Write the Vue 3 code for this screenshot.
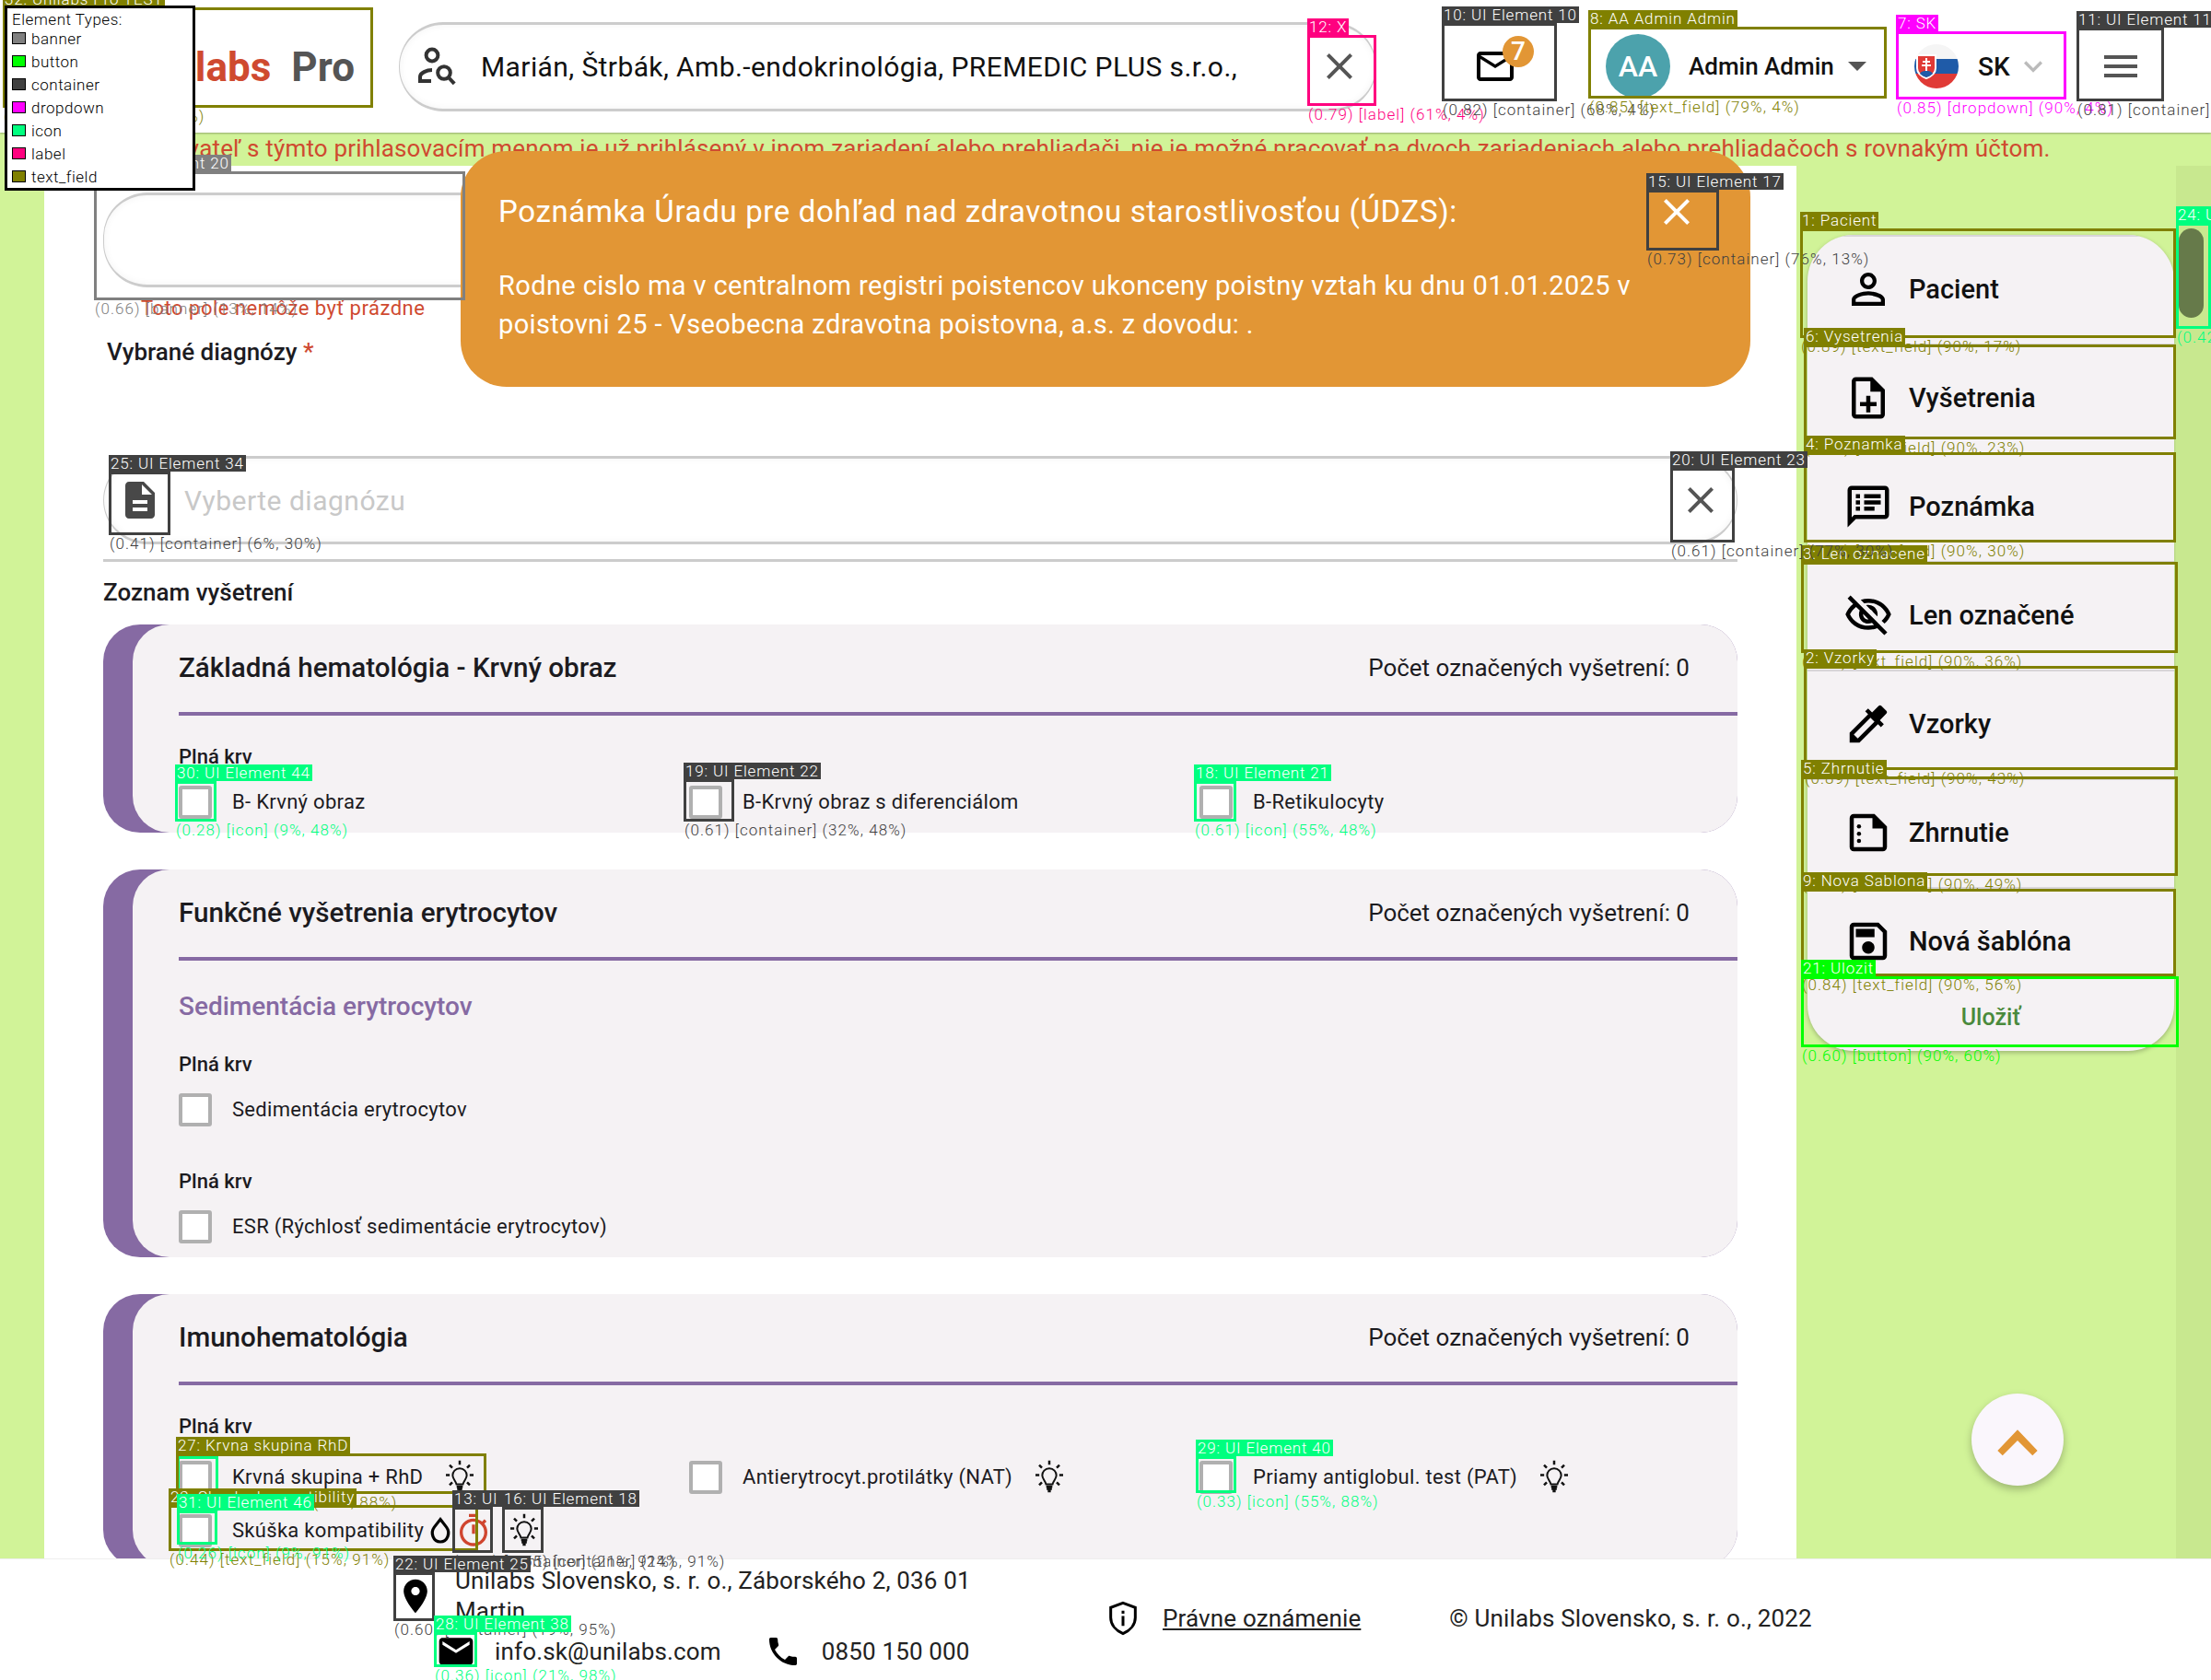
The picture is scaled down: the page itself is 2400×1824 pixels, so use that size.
<template>
  <div class="page">
    <header class="top">
      <div class="logo"><span class="logo-red">Unilabs</span><span class="logo-pro">Pro</span></div>
      <div class="search pill">
        <svg class="search-ico" viewBox="0 0 24 24" fill="none" stroke="#333" stroke-width="2">
          <circle cx="9.5" cy="6" r="3.2" />
          <path d="M3 20v-2.4c0-2 3.6-3.6 6.5-3.6" />
          <path d="M2 20h7" />
          <circle cx="16" cy="15.5" r="3.4" />
          <path d="M18.4 18l3.2 3.4" />
        </svg>
        <span class="search-text">Marián, Štrbák, Amb.-endokrinológia, PREMEDIC PLUS s.r.o.,</span>
        <svg class="ico48 grey push" viewBox="0 0 24 24"><path :d="icons.close" /></svg>
      </div>
      <div class="mail">
        <svg class="ico48" viewBox="0 0 24 24"><path :d="icons.mail" /></svg>
        <span class="badge">7</span>
      </div>
      <div class="user">
        <span class="avatar">AA</span>
        <span class="user-name">Admin Admin</span>
        <svg class="caret" viewBox="0 0 10 5"><path d="M0 0h10L5 5z" /></svg>
      </div>
      <div class="lang">
        <svg class="flag" viewBox="0 0 48 48">
          <defs><clipPath id="flagclip"><circle cx="24" cy="24" r="24" /></clipPath></defs>
          <g clip-path="url(#flagclip)">
            <rect width="48" height="16" fill="#f5f5f5" />
            <rect y="16" width="48" height="16" fill="#1f5ba8" />
            <rect y="32" width="48" height="16" fill="#e03a36" />
            <path d="M3 12h20v14c0 6-5 9-10 11-5-2-10-5-10-11z" fill="#e03a36" stroke="#fff" stroke-width="2" />
            <path d="M13 15v15M9 19h8M8 23h10" stroke="#fff" stroke-width="2" />
            <path d="M6 32c2-3 4-3 7-3s5 0 7 3c-2 2-4 3-7 4-3-1-5-2-7-4z" fill="#1f5ba8" />
          </g>
        </svg>
        <span class="lang-code">SK</span>
        <svg class="ico40" viewBox="0 0 24 24" fill="#bbb"><path :d="icons.expand" /></svg>
      </div>
      <div class="menu">
        <svg class="ico48 grey" viewBox="0 0 24 24"><path :d="icons.menu" /></svg>
      </div>
    </header>

    <div class="warn">Používateľ s týmto prihlasovacím menom je už prihlásený v inom zariadení alebo prehliadači, nie je možné pracovať na dvoch zariadeniach alebo prehliadačoch s rovnakým účtom.</div>

    <div class="body">
      <main class="main">
        <div class="pill empty"></div>
        <div class="err">Toto pole nemôže byť prázdne</div>
        <div class="field-label">Vybrané diagnózy <span class="req">*</span></div>
        <div class="diag-wrap">
          <div class="pill diag">
            <svg class="ico48 dark" viewBox="0 0 24 24"><path :d="icons.doc" /></svg>
            <span class="placeholder">Vyberte diagnózu</span>
            <svg class="ico48 grey push" viewBox="0 0 24 24"><path :d="icons.close" /></svg>
          </div>
        </div>
        <div class="list-title">Zoznam vyšetrení</div>

        <section v-for="card in cards" :key="card.title" class="card">
          <div class="card-in">
            <div class="card-head">
              <span class="card-title">{{ card.title }}</span>
              <span class="card-count">Počet označených vyšetrení: 0</span>
            </div>
            <div class="card-line"></div>
            <div v-if="card.sub" class="card-sub">{{ card.sub }}</div>
            <div v-for="(group, g) in card.groups" :key="g" class="group">
              <div class="group-name">Plná krv</div>
              <div class="checks">
                <div v-for="item in group" :key="item.name" class="check" :class="{ tall: item.bulb }">
                  <span class="box"></span>
                  <span class="check-text">{{ item.name }}</span>
                  <template v-if="item.warn">
                    <svg class="drop" viewBox="0 0 24 24" fill="none" stroke="#000" stroke-width="2.4"><path d="M12 2.7l5 6.4c3.4 4.6.8 11.9-5 11.9s-8.400-7.300-5-11.900z" /></svg>
                    <svg class="ico40 red" viewBox="0 0 24 24"><path :d="icons.timer" /></svg>
                  </template>
                  <svg v-if="item.bulb" class="bulb" :class="{ near: item.warn }" viewBox="0 0 24 24" fill="none" stroke="#111" stroke-width="1.200">
                    <path d="M12 6.200c-2.800 0-4.600 2.100-4.600 4.500 0 2.200 1.900 3.400 2.500 5.800h4.200c.6-2.400 2.500-3.600 2.500-5.800 0-2.400-1.800-4.500-4.600-4.500z" />
                    <path d="M10 18h4M10.300 19.500h3.400M11 21h2M12 1v2.800M3 10.500h2.500M18.500 10.500H21M5.400 4l1.800 1.800M18.600 4l-1.800 1.800M5.400 17l1.800-1.800M18.600 17l-1.800-1.800" stroke-width="1.500" />
                  </svg>
                </div>
              </div>
            </div>
          </div>
        </section>
      </main>

      <aside class="side">
        <nav class="side-nav">
          <div v-for="it in navItems" :key="it.label" class="side-item">
            <svg class="side-ico" viewBox="0 0 24 24">
              <path :d="it.d" />
              <template v-if="it.dots">
                <circle cx="7.500" cy="9" r="1" /><circle cx="7.500" cy="12.500" r="1" /><circle cx="7.500" cy="16" r="1" />
              </template>
            </svg>
            <span>{{ it.label }}</span>
          </div>
          <div class="side-save">Uložiť</div>
        </nav>
      </aside>
      <div class="track"><div class="thumb"></div></div>
    </div>

    <footer class="foot">
      <div class="foot-left">
        <div class="addr">
          <svg class="ico44" viewBox="0 0 24 24"><path :d="icons.place" /></svg>
          <span class="addr-text">Unilabs Slovensko, s. r. o., Záborského 2, 036 01 Martin</span>
        </div>
        <div class="contact">
          <svg class="ico44" viewBox="0 0 24 24"><path :d="icons.mailFull" /></svg>
          <span class="contact-mail">info.sk@unilabs.com</span>
          <svg class="ico40" viewBox="0 0 24 24"><path :d="icons.phone" /></svg>
          <span class="contact-tel">0850 150 000</span>
        </div>
      </div>
      <div class="foot-right">
        <svg class="ico40" viewBox="0 0 24 24" fill="none" stroke="#000" stroke-width="1.800">
          <path d="M12 2l8 3v6.500c0 4.500-3.200 8.400-8 10.500-4.800-2.100-8-6-8-10.500V5z" />
          <path d="M12 10.500v6.500M12 7v2" />
        </svg>
        <a class="legal">Právne oznámenie</a>
        <span class="copy">© Unilabs Slovensko, s. r. o., 2022</span>
      </div>
    </footer>

    <!-- toast over the form -->
    <div class="toast">
      <div class="toast-title">Poznámka Úradu pre dohľad nad zdravotnou starostlivosťou (ÚDZS):</div>
      <div class="toast-body">Rodne cislo ma v centralnom registri poistencov ukonceny poistny vztah ku dnu 01.01.2025 v poistovni 25 - Vseobecna zdravotna poistovna, a.s. z dovodu: .</div>
      <svg class="toast-x" viewBox="0 0 24 24"><path :d="icons.close" /></svg>
    </div>

    <button class="to-top">
      <svg viewBox="0 0 24 24"><path d="M12 7L2 17.500l2.500 2.500L12 12.500l7.500 7.500 2.500-2.500z" /></svg>
    </button>

    <!-- detection boxes drawn over the screenshot -->
    <div class="marks">
      <div v-for="m in marks" :key="m.label + m.y" class="mark" :style="markBox(m)">
        <span v-if="m.label" class="mark-label" :style="{ background: colors[m.type] }">{{ m.label }}</span>
        <span v-if="m.cap" class="mark-cap" :style="{ color: colors[m.type] }">{{ m.cap }}</span>
      </div>
    </div>

    <div class="legend">
      <div class="legend-title">Element Types:</div>
      <div v-for="(c, name) in colors" :key="name" class="legend-row">
        <span class="swatch" :style="{ background: c }"></span>{{ name }}
      </div>
    </div>
  </div>
</template>

<script setup>
const icons = {
  close: 'M19 6.41L17.59 5 12 10.59 6.41 5 5 6.41 10.59 12 5 17.59 6.41 19 12 13.41 17.59 19 19 17.59 13.41 12z',
  mail: 'M20 4H4c-1.1 0-1.99.9-1.99 2L2 18c0 1.100.9 2 2 2h16c1.100 0 2-.9 2-2V6c0-1.100-.9-2-2-2zm0 14H4V8l8 5 8-5v10zm-8-7L4 6h16l-8 5z',
  mailFull: 'M20 4H4c-1.100 0-1.990.9-1.990 2L2 18c0 1.100.9 2 2 2h16c1.100 0 2-.9 2-2V6c0-1.100-.9-2-2-2zm0 4l-8 5-8-5V6l8 5 8-5v2z',
  expand: 'M16.590 8.590L12 13.170 7.410 8.590 6 10l6 6 6-6z',
  menu: 'M3 18h18v-2H3v2zm0-5h18v-2H3v2zm0-7v2h18V6H3z',
  doc: 'M14 2H6c-1.100 0-1.990.9-1.990 2L4 20c0 1.100.89 2 1.990 2H18c1.100 0 2-.9 2-2V8l-6-6zm2 16H8v-2h8v2zm0-4H8v-2h8v2zm-3-5V3.500L18.500 9H13z',
  timer: 'M15 1H9v2h6V1zm-4 13h2V8h-2v6zm8.030-6.610l1.420-1.420c-.43-.51-.9-.99-1.410-1.410l-1.420 1.420C16.070 4.740 14.120 4 12 4c-4.970 0-9 4.030-9 9s4.020 9 9 9 9-4.030 9-9c0-2.120-.74-4.070-1.970-5.610zM12 20c-3.870 0-7-3.130-7-7s3.130-7 7-7 7 3.130 7 7-3.130 7-7 7z',
  place: 'M12 2C8.130 2 5 5.130 5 9c0 5.250 7 13 7 13s7-7.750 7-13c0-3.870-3.130-7-7-7zm0 9.500c-1.380 0-2.500-1.120-2.500-2.500s1.120-2.500 2.500-2.500 2.500 1.120 2.500 2.500-1.120 2.500-2.500 2.500z',
  phone: 'M6.620 10.790c1.440 2.830 3.760 5.140 6.590 6.590l2.200-2.200c.27-.27.67-.36 1.020-.24 1.120.37 2.330.57 3.570.57.55 0 1 .45 1 1V20c0 .55-.45 1-1 1-9.390 0-17-7.610-17-17 0-.55.45-1 1-1h3.500c.55 0 1 .45 1 1 0 1.250.2 2.450.57 3.570.11.35.03.74-.25 1.020l-2.200 2.200z'
}

const navItems = [
  { label: 'Pacient', d: 'M12 5.900c1.160 0 2.100.94 2.100 2.100s-.94 2.100-2.100 2.100S9.900 9.160 9.900 8s.94-2.100 2.100-2.100m0 9c2.970 0 6.100 1.460 6.100 2.100v1.100H5.900V17c0-.64 3.130-2.100 6.100-2.100M12 4C9.790 4 8 5.790 8 8s1.790 4 4 4 4-1.790 4-4-1.790-4-4-4zm0 9c-2.670 0-8 1.340-8 4v3h16v-3c0-2.660-5.330-4-8-4z' },
  { label: 'Vyšetrenia', d: 'M13 11h-2v3H8v2h3v3h2v-3h3v-2h-3zm1-9H6c-1.100 0-2 .9-2 2v16c0 1.100.89 2 1.990 2H18c1.100 0 2-.9 2-2V8l-6-6zm4 18H6V4h7v5h5v11z' },
  { label: 'Poznámka', d: 'M20 2H4c-1.100 0-2 .9-2 2v18l4-4h14c1.100 0 2-.9 2-2V4c0-1.100-.9-2-2-2zm0 14H5.170L4 17.170V4h16v12zM6 12h2v2H6zm0-3h2v2H6zm0-3h2v2H6zm4 6h5v2h-5zm0-3h8v2h-8zm0-3h8v2h-8z' },
  { label: 'Len označené', d: 'M12 6c3.790 0 7.170 2.130 8.820 5.500-.59 1.220-1.420 2.270-2.410 3.120l1.410 1.410c1.390-1.230 2.490-2.770 3.180-4.530C21.270 7.110 17 4 12 4c-1.270 0-2.490.2-3.640.57l1.650 1.650C10.660 6.090 11.320 6 12 6zm-1.070 1.140L13 9.210c.57.25 1.030.71 1.280 1.280l2.070 2.070c.08-.34.14-.7.14-1.070C16.500 9.010 14.480 7 12 7c-.37 0-.72.05-1.070.14zM2.010 3.870l2.680 2.680C3.060 7.830 1.770 9.530 1 11.500 2.730 15.890 7 19 12 19c1.520 0 2.980-.29 4.320-.82l3.420 3.420 1.410-1.410L3.420 2.450 2.010 3.870zm7.500 7.500l2.610 2.610c-.04.01-.08.02-.12.02-1.380 0-2.500-1.120-2.500-2.500 0-.05.01-.08.01-.13zm-3.400-3.400l1.750 1.750c-.23.55-.36 1.150-.36 1.780 0 2.480 2.020 4.500 4.500 4.500.63 0 1.230-.13 1.770-.36l.98.98c-.88.24-1.800.38-2.750.38-3.790 0-7.170-2.130-8.820-5.500.7-1.430 1.720-2.610 2.930-3.530z' },
  { label: 'Vzorky', d: 'M20.710 5.630l-2.340-2.340c-.39-.39-1.020-.39-1.410 0l-3.120 3.120-1.930-1.910-1.410 1.410 1.420 1.420L3 16.250V21h4.750l8.920-8.920 1.420 1.420 1.410-1.410-1.920-1.920 3.120-3.120c.4-.4.4-1.030.01-1.420zM6.920 19L5 17.080l8.060-8.060 1.920 1.920L6.920 19z' },
  { label: 'Zhrnutie', d: 'M15 3H5c-1.100 0-1.990.9-1.990 2L3 19c0 1.100.89 2 1.990 2H19c1.100 0 2-.9 2-2V9l-6-6zM5 19V5h9v5h5v9H5z', dots: true },
  { label: 'Nová šablóna', d: 'M17 3H5c-1.110 0-2 .9-2 2v14c0 1.100.89 2 2 2h14c1.100 0 2-.9 2-2V7l-4-4zm2 16H5V5h11.170L19 7.830V19zm-7-7c-1.660 0-3 1.340-3 3s1.340 3 3 3 3-1.340 3-3-1.340-3-3-3zM6 6h9v4H6z' }
]

const cards = [
  {
    title: 'Základná hematológia - Krvný obraz',
    groups: [[{ name: 'B- Krvný obraz' }, { name: 'B-Krvný obraz s diferenciálom' }, { name: 'B-Retikulocyty' }]]
  },
  {
    title: 'Funkčné vyšetrenia erytrocytov',
    sub: 'Sedimentácia erytrocytov',
    groups: [[{ name: 'Sedimentácia erytrocytov' }], [{ name: 'ESR (Rýchlosť sedimentácie erytrocytov)' }]]
  },
  {
    title: 'Imunohematológia',
    groups: [[
      { name: 'Krvná skupina + RhD', bulb: true },
      { name: 'Antierytrocyt.protilátky (NAT)', bulb: true },
      { name: 'Priamy antiglobul. test (PAT)', bulb: true },
      { name: 'Skúška kompatibility', bulb: true, warn: true }
    ]]
  }
]

const colors = {
  banner: '#808080',
  button: '#00ff00',
  container: '#404040',
  dropdown: '#ff00ff',
  icon: '#00ff7f',
  label: '#ff007f',
  text_field: '#808000'
}

const marks = [
  { type: 'text_field', x: 3, y: 8, w: 402, h: 109, label: '32: Unilabs Pro TEST', cap: '(0.55) [text_field] (8%, 3%)' },
  { type: 'label', x: 1419, y: 38, w: 75, h: 77, label: '12: X', cap: '(0.79) [label] (61%, 4%)' },
  { type: 'container', x: 1565, y: 25, w: 125, h: 85, label: '10: UI Element 10', cap: '(0.82) [container] (68%, 4%)' },
  { type: 'text_field', x: 1724, y: 29, w: 324, h: 78, label: '8: AA Admin Admin', cap: '(0.85) [text_field] (79%, 4%)' },
  { type: 'dropdown', x: 2058, y: 34, w: 185, h: 74, label: '7: SK', cap: '(0.85) [dropdown] (90%, 4%)' },
  { type: 'container', x: 2254, y: 30, w: 95, h: 80, label: '11: UI Element 11', cap: '(0.81) [container] (97%, 4%)' },
  { type: 'container', x: 1787, y: 206, w: 79, h: 66, label: '15: UI Element 17', cap: '(0.73) [container] (76%, 13%)' },
  { type: 'banner', x: 102, y: 186, w: 403, h: 140, label: '26: UI Element 20', cap: '(0.66) [banner] (13%, 14%)' },
  { type: 'text_field', x: 1954, y: 248, w: 408, h: 119, label: '1: Pacient', cap: '(0.89) [text_field] (90%, 17%)' },
  { type: 'text_field', x: 1958, y: 374, w: 404, h: 103, label: '6: Vysetrenia', cap: '(0.89) [text_field] (90%, 23%)' },
  { type: 'text_field', x: 1958, y: 491, w: 404, h: 98, label: '4: Poznamka', cap: '(0.87) [text_field] (90%, 30%)' },
  { type: 'text_field', x: 1955, y: 610, w: 409, h: 99, label: '3: Len oznacene', cap: '(0.87) [text_field] (90%, 36%)' },
  { type: 'text_field', x: 1958, y: 723, w: 406, h: 113, label: '2: Vzorky', cap: '(0.89) [text_field] (90%, 43%)' },
  { type: 'text_field', x: 1955, y: 843, w: 409, h: 108, label: '5: Zhrnutie', cap: '(0.89) [text_field] (90%, 49%)' },
  { type: 'text_field', x: 1955, y: 965, w: 407, h: 95, label: '9: Nova Sablona', cap: '(0.84) [text_field] (90%, 56%)' },
  { type: 'button', x: 1955, y: 1060, w: 410, h: 77, label: '21: Ulozit', cap: '(0.60) [button] (90%, 60%)' },
  { type: 'icon', x: 2362, y: 242, w: 38, h: 115, label: '24: UI Element 30', cap: '(0.42) [icon] (99%, 16%)' },
  { type: 'container', x: 118, y: 512, w: 67, h: 69, label: '25: UI Element 34', cap: '(0.41) [container] (6%, 30%)' },
  { type: 'container', x: 1813, y: 508, w: 70, h: 81, label: '20: UI Element 23', cap: '(0.61) [container] (77%, 30%)' },
  { type: 'icon', x: 190, y: 848, w: 45, h: 44, label: '30: UI Element 44', cap: '(0.28) [icon] (9%, 48%)' },
  { type: 'container', x: 742, y: 846, w: 55, h: 46, label: '19: UI Element 22', cap: '(0.61) [container] (32%, 48%)' },
  { type: 'icon', x: 1296, y: 848, w: 46, h: 44, label: '18: UI Element 21', cap: '(0.61) [icon] (55%, 48%)' },
  { type: 'icon', x: 192, y: 1581, w: 45, h: 40, label: '', cap: '' },
  { type: 'text_field', x: 191, y: 1578, w: 337, h: 44, label: '27: Krvna skupina RhD', cap: '(0.46) [text_field] (15%, 88%)' },
  { type: 'icon', x: 1298, y: 1581, w: 44, h: 40, label: '29: UI Element 40', cap: '(0.33) [icon] (55%, 88%)' },
  { type: 'text_field', x: 183, y: 1634, w: 336, h: 50, label: '23: Skuska kompatibility', cap: '(0.44) [text_field] (15%, 91%)' },
  { type: 'icon', x: 192, y: 1640, w: 44, h: 37, label: '31: UI Element 46', cap: '(0.26) [icon] (9%, 91%)' },
  { type: 'container', x: 491, y: 1636, w: 44, h: 50, label: '13: UI Element 16', cap: '(0.52) [container] (21%, 91%)' },
  { type: 'container', x: 545, y: 1636, w: 45, h: 50, label: '16: UI Element 18', cap: '(0.55) [container] (24%, 91%)' },
  { type: 'container', x: 427, y: 1707, w: 45, h: 53, label: '22: UI Element 25', cap: '(0.60) [container] (19%, 95%)' },
  { type: 'icon', x: 471, y: 1772, w: 47, h: 38, label: '28: UI Element 38', cap: '(0.36) [icon] (21%, 98%)' }
]

const markBox = (m) => ({
  left: m.x + 'px',
  top: m.y + 'px',
  width: m.w + 'px',
  height: m.h + 'px',
  borderColor: colors[m.type]
})
</script>

<style>
html, body {
  margin: 0;
}
</style>

<style scoped>
.page {
  position: relative;
  display: flex;
  flex-direction: column;
  width: 2400px;
  height: 1824px;
  overflow: hidden;
  background: #d1f398;
  font-family: Roboto, "Noto Sans", sans-serif;
  color: #1c1b1f;
}

svg {
  flex: none;
  display: block;
}

.ico40 { width: 40px; height: 40px; }
.ico44 { width: 44px; height: 44px; }
.ico48 { width: 48px; height: 48px; }
.grey { fill: #555; }
.dark { fill: #484848; }
.red { fill: #d0452f; }
.push { margin-left: auto; }

/* header */
.top {
  display: flex;
  align-items: center;
  height: 144px;
  flex: none;
  background: #fff;
  box-shadow: 0 1px 2px rgba(0, 0, 0, .3);
  position: relative;
  z-index: 1;
}

.logo {
  width: 385px;
  padding-top: 2px;
  text-align: right;
  font-size: 44px;
  font-weight: 700;
  white-space: nowrap;
}

.logo-red { color: #cf4a30; }
.logo-pro { color: #555; margin-left: 22px; }

.pill {
  box-sizing: border-box;
  border: 1px solid #ccc;
  border-top-width: 3px;
  border-bottom-width: 3px;
  border-radius: 48px;
  box-shadow: inset 0 0 8px rgba(0, 0, 0, .05);
  background: #fff;
}

.search {
  display: flex;
  align-items: center;
  width: 1061px;
  height: 97px;
  margin-left: 48px;
  padding: 0 15px 0 16px;
}

.search-text {
  margin-left: 24px;
  font-size: 30px;
  letter-spacing: .4px;
  color: #111;
  white-space: nowrap;
}

.search-ico { width: 48px; height: 48px; }

.mail {
  position: relative;
  display: flex;
  box-sizing: border-box;
  margin-left: 71px;
  padding-left: 34px;
  width: 125px;
}

.badge {
  position: absolute;
  left: 66px;
  top: -9px;
  width: 34px;
  height: 34px;
  border-radius: 50%;
  background: #e29635;
  color: #fff;
  font-size: 28px;
  font-weight: 500;
  line-height: 34px;
  text-align: center;
}

.user {
  display: flex;
  align-items: center;
  width: 324px;
  margin-left: 34px;
  padding-left: 19px;
  box-sizing: border-box;
}

.avatar {
  width: 70px;
  height: 70px;
  border-radius: 50%;
  background: #4ca2ac;
  color: #fff;
  font-size: 32px;
  font-weight: 500;
  line-height: 70px;
  text-align: center;
}

.user-name {
  margin-left: 20px;
  font-size: 26px;
  font-weight: 500;
  color: #111;
  white-space: nowrap;
}

.caret {
  width: 20px;
  height: 10px;
  margin-left: 15px;
  fill: #555;
}

.lang {
  display: flex;
  align-items: center;
  width: 185px;
  margin-left: 10px;
  padding-left: 20px;
  box-sizing: border-box;
}

.flag { width: 48px; height: 48px; }

.lang-code {
  margin-left: 21px;
  font-size: 28px;
  font-weight: 500;
  color: #111;
}

.lang .ico40 { margin-left: 5px; }

.menu {
  display: flex;
  justify-content: center;
  width: 95px;
  margin-left: 11px;
}

/* warning line */
.warn {
  flex: none;
  height: 36px;
  padding-left: 138px;
  font-size: 26px;
  letter-spacing: .17px;
  line-height: 34px;
  color: #cf4a30;
  white-space: nowrap;
}

/* content */
.body {
  display: flex;
  flex: 1;
  min-height: 0;
}

.main {
  flex: none;
  box-sizing: border-box;
  width: 1902px;
  margin-left: 48px;
  padding: 29px 64px 0;
  background: #fff;
  overflow: hidden;
}

.empty {
  width: 500px;
  height: 103px;
}

.err {
  margin: 8px 0 0 41px;
  font-size: 22px;
  line-height: 30px;
  letter-spacing: .5px;
  color: #cf4a30;
}

.field-label {
  margin: 17px 0 0 4px;
  font-size: 26px;
  font-weight: 500;
  line-height: 30px;
}

.req { color: #cf4a30; }

.diag-wrap {
  margin-top: 98px;
  padding-bottom: 16px;
  border-bottom: 3px solid #ccc;
}

.diag {
  display: flex;
  align-items: center;
  height: 96px;
  padding: 0 15px;
}

.placeholder {
  margin-left: 24px;
  font-size: 30px;
  letter-spacing: .5px;
  color: #c8c8c8;
}

.list-title {
  margin-top: 18px;
  font-size: 26px;
  font-weight: 500;
  line-height: 30px;
  white-space: nowrap;
}

.card {
  margin-top: 20px;
  background: #866aa3;
  border-radius: 40px;
}

.card + .card { margin-top: 40px; }

.card-in {
  margin-left: 32px;
  padding-bottom: 15px;
  background: #f5f2f4;
  border-radius: 40px;
}

.card-head {
  display: flex;
  align-items: center;
  justify-content: space-between;
  box-sizing: border-box;
  height: 95px;
  padding: 0 52px 2px 50px;
}

.card-title {
  font-size: 29.6px;
  font-weight: 500;
}

.card-count {
  font-size: 26px;
}

.card-line {
  height: 4px;
  margin-left: 50px;
  background: #866aa3;
}

.card-sub {
  margin: 32px 0 0 50px;
  font-size: 28px;
  font-weight: 500;
  line-height: 36px;
  color: #866aa3;
}

.group {
  margin: 31px 0 0 50px;
}

.group + .group { margin-top: 46px; }

.group-name {
  font-size: 22px;
  font-weight: 500;
  line-height: 28px;
}

.checks {
  display: grid;
  grid-template-columns: repeat(3, 554px);
  row-gap: 10px;
  margin-top: 17px;
}

.check {
  display: flex;
  align-items: center;
  min-height: 36px;
}

.check.tall { min-height: 48px; }

.box {
  flex: none;
  box-sizing: border-box;
  width: 36px;
  height: 36px;
  border: 4px solid #b0b0b0;
  border-radius: 3px;
  background: #fff;
}

.check-text {
  margin-left: 22px;
  padding-bottom: 1px;
  font-size: 22px;
  letter-spacing: .3px;
  white-space: nowrap;
}

.bulb {
  width: 40px;
  height: 40px;
  margin-left: 20px;
}

.bulb.near { margin-left: 15px; }

.drop {
  width: 32px;
  height: 32px;
  margin-left: 2px;
}

/* right rail */
.side {
  flex: none;
  width: 412px;
}

.side-nav {
  width: 398px;
  margin: 75px 0 0 12px;
  background: #f5f2f4;
  border-radius: 50px;
  box-shadow: 0 2px 5px rgba(0, 0, 0, .25);
  overflow: hidden;
}

.side-item {
  display: flex;
  align-items: center;
  box-sizing: border-box;
  height: 118px;
  padding: 0 0 3px 39px;
  border-top: 2px solid #d8d5d8;
  font-size: 29px;
  font-weight: 500;
  color: #111;
}

.side-ico {
  width: 54px;
  height: 54px;
  margin-right: 17px;
}

.side-save {
  height: 54px;
  padding-bottom: 6px;
  font-size: 25px;
  font-weight: 500;
  line-height: 48px;
  text-align: center;
  color: #4a8a3c;
}

.track {
  flex: none;
  box-sizing: border-box;
  width: 38px;
  padding: 68px 8px 0 3px;
  background: #c8e88f;
}

.thumb {
  height: 97px;
  background: #667a4a;
  border-radius: 14px;
}

/* footer */
.foot {
  display: flex;
  flex: none;
  height: 132px;
  background: #fff;
  border-top: 1px solid #eee;
  box-sizing: border-box;
  font-size: 26px;
  letter-spacing: .15px;
  color: #222;
}

.foot-left {
  box-sizing: border-box;
  width: 1054px;
  padding: 7px 0 0 429px;
}

.addr {
  display: flex;
  align-items: center;
}

.addr-text {
  width: 562px;
  margin-left: 21px;
  line-height: 33px;
}

.contact {
  display: flex;
  align-items: center;
  height: 36px;
  margin: 9px 0 0 44px;
  white-space: nowrap;
}

.contact-mail { margin: 0 47px 0 20px; }
.contact-tel { margin-left: 22px; }

.foot-right {
  display: flex;
  align-items: center;
  height: 128px;
  margin-left: 145px;
  white-space: nowrap;
}

.legal {
  margin-left: 23px;
  text-decoration: underline;
}

.copy { margin-left: 96px; }

/* toast */
.toast {
  position: absolute;
  left: 500px;
  top: 164px;
  box-sizing: border-box;
  width: 1400px;
  height: 256px;
  padding: 46px 100px 0 41px;
  background: #e29635;
  border-radius: 50px;
  color: #fff;
  z-index: 2;
}

.toast-title {
  font-size: 33px;
  line-height: 40px;
  letter-spacing: .65px;
  white-space: nowrap;
}

.toast-body {
  margin-top: 39px;
  font-size: 29px;
  line-height: 42px;
  letter-spacing: .38px;
}

.toast-x {
  position: absolute;
  left: 1296px;
  top: 42px;
  width: 48px;
  height: 48px;
  fill: #fff;
}

.to-top {
  position: absolute;
  left: 2140px;
  top: 1513px;
  width: 100px;
  height: 100px;
  padding: 24px;
  border: 0;
  border-radius: 50%;
  background: #faf6fc;
  box-shadow: 0 4px 8px rgba(0, 0, 0, .25);
  fill: #e29635;
}

/* overlay */
.marks {
  position: absolute;
  inset: 0;
  z-index: 3;
  font-family: Roboto, sans-serif;
  font-weight: 300;
}

.mark {
  position: absolute;
  box-sizing: border-box;
  border: 3px solid;
}

.mark-label {
  position: absolute;
  left: -3px;
  bottom: 100%;
  margin-bottom: 3px;
  height: 18px;
  padding: 0 2px;
  color: #fff;
  font-size: 17px;
  line-height: 18px;
  letter-spacing: .85px;
  white-space: nowrap;
}

.mark-cap {
  position: absolute;
  left: -2px;
  top: 100%;
  margin-top: 3px;
  font-size: 17px;
  line-height: 18px;
  letter-spacing: 1.05px;
  white-space: nowrap;
}

.legend {
  position: absolute;
  left: 5px;
  top: 6px;
  box-sizing: border-box;
  width: 207px;
  height: 201px;
  padding: 3px 5px;
  border: 3px solid #000;
  background: #fff;
  font-family: Roboto, sans-serif;
  font-weight: 300;
  font-size: 17px;
  letter-spacing: .5px;
  color: #000;
  z-index: 4;
}

.legend-title {
  height: 18px;
  line-height: 18px;
  margin-bottom: -1px;
}

.legend-row {
  display: flex;
  align-items: center;
  height: 25px;
}

.swatch {
  flex: none;
  width: 13px;
  height: 11px;
  margin-right: 6px;
  border: 1px solid #000;
}
</style>
